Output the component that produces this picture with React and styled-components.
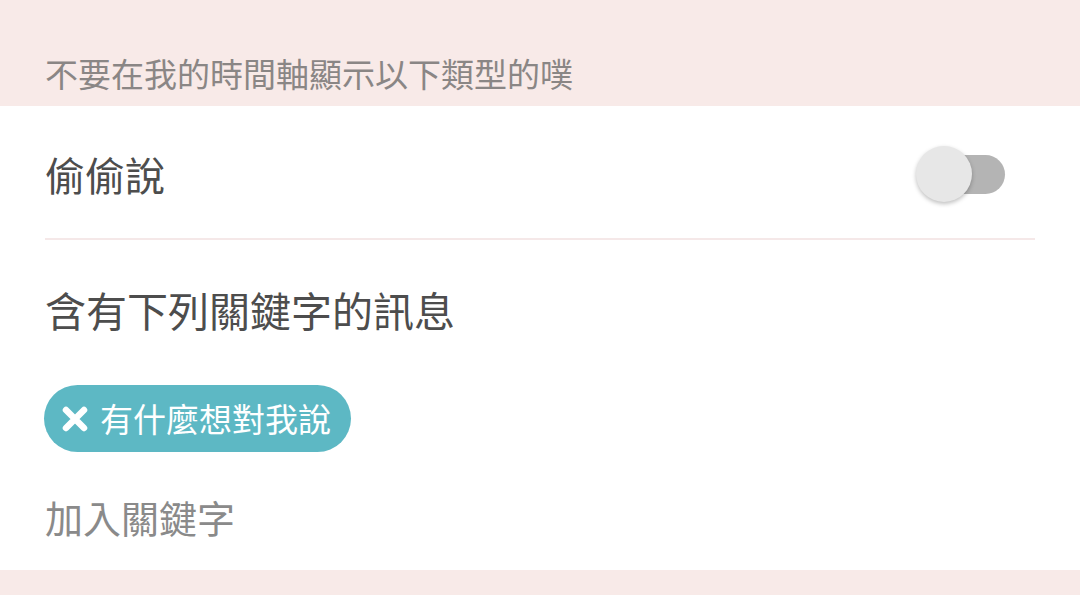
import React from 'react';
import styled, { createGlobalStyle } from 'styled-components';

const GlobalStyle = createGlobalStyle`
    html, body {
        margin: 0;
        padding: 0;
        background: #f8eae8;
        font-family: "Noto Sans CJK TC", "Noto Sans", sans-serif;
    }
`

const Page = styled.div`
    width: 1080px;
    height: 595px;
    background: #f8eae8;
    display: flex;
    flex-direction: column;
`

const SectionHeader = styled.div`
    height: 106px;
    box-sizing: border-box;
    display: flex;
    align-items: flex-end;
    padding: 0 45px 16px;
    font-size: 33px;
    line-height: 1;
    color: #8a8685;
`

const Panel = styled.div`
    background: #ffffff;
    display: flex;
    flex-direction: column;
    padding-bottom: 34px;
`

const Row = styled.div`
    height: 132px;
    box-sizing: border-box;
    display: flex;
    align-items: center;
    justify-content: space-between;
    padding: 4px 75px 0 45px;
`

const Label = styled.div`
    font-size: ${props => props.size || 40}px;
    line-height: 1;
    color: ${props => props.muted ? '#8a8a8a' : '#4d4d4d'};
`

const Divider = styled.div`
    height: 2px;
    margin: 0 45px;
    background: #f5e8e8;
`

const KeywordBlock = styled.div`
    display: flex;
    flex-direction: column;
    align-items: flex-start;
    padding: 49px 45px 0 45px;
`

const Chips = styled.div`
    display: flex;
    gap: 12px;
    margin: 55px 0 46px -1px;
`

const Chip = styled.div`
    height: 67px;
    box-sizing: border-box;
    display: flex;
    align-items: center;
    gap: 11px;
    padding: 0 20px 0 17px;
    border-radius: 34px;
    background: #5db8c4;
    color: #ffffff;
    font-size: 33px;
    line-height: 1;
`

const Switch = styled.div`
    position: relative;
    width: 88px;
    height: 39px;
    border-radius: 20px;
    background: #b4b4b4;
`

const Thumb = styled.div`
    position: absolute;
    top: -9px;
    left: -1px;
    width: 56px;
    height: 56px;
    border-radius: 50%;
    background: #e7e7e7;
    box-shadow: 0 2px 4px rgba(0,0,0,0.25);
`

const CloseIcon = () =>
    <svg width="28" height="28" viewBox="0 0 28 28">
        <path d="M5 5 L23 23 M23 5 L5 23" stroke="#fff" strokeWidth="6.5" strokeLinecap="round" />
    </svg>

const App = () =>
    <Page>
        <GlobalStyle />
        <SectionHeader>不要在我的時間軸顯示以下類型的噗</SectionHeader>
        <Panel>
            <Row>
                <Label>偷偷說</Label>
                <Switch><Thumb /></Switch>
            </Row>
            <Divider />
            <KeywordBlock>
                <Label size={41}>含有下列關鍵字的訊息</Label>
                <Chips>
                    <Chip><CloseIcon />有什麼想對我說</Chip>
                </Chips>
                <Label size={38} muted>加入關鍵字</Label>
            </KeywordBlock>
        </Panel>
    </Page>

export default App
